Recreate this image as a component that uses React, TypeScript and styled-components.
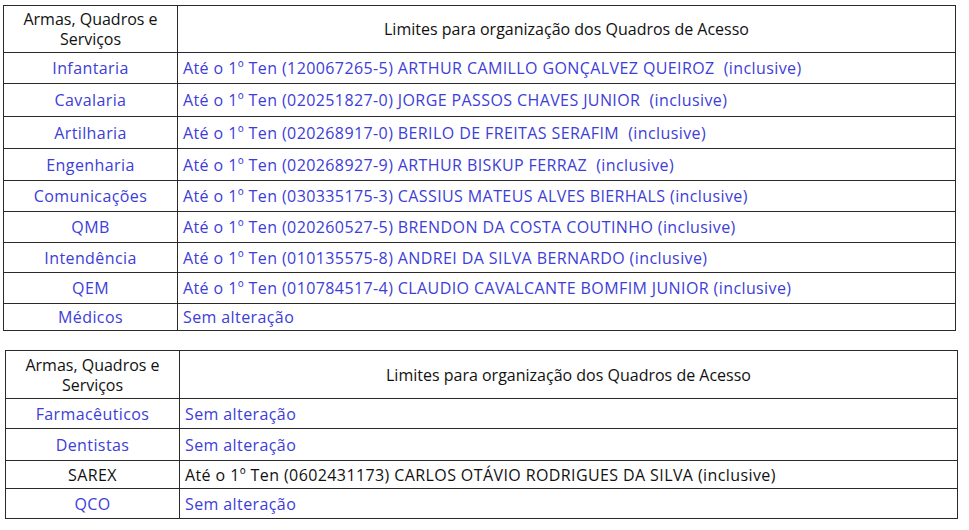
import styled, { createGlobalStyle } from "styled-components";

type Row = {
  name: string;
  limit: string;
  dark?: boolean;
  height: number;
};

const firstTable: Row[] = [
  { name: "Infantaria", limit: "Até o 1º Ten (120067265-5) ARTHUR CAMILLO GONÇALVEZ QUEIROZ  (inclusive)", height: 31 },
  { name: "Cavalaria", limit: "Até o 1º Ten (020251827-0) JORGE PASSOS CHAVES JUNIOR  (inclusive)", height: 33 },
  { name: "Artilharia", limit: "Até o 1º Ten (020268917-0) BERILO DE FREITAS SERAFIM  (inclusive)", height: 32 },
  { name: "Engenharia", limit: "Até o 1º Ten (020268927-9) ARTHUR BISKUP FERRAZ  (inclusive)", height: 32 },
  { name: "Comunicações", limit: "Até o 1º Ten (030335175-3) CASSIUS MATEUS ALVES BIERHALS (inclusive)", height: 31 },
  { name: "QMB", limit: "Até o 1º Ten (020260527-5) BRENDON DA COSTA COUTINHO (inclusive)", height: 31 },
  { name: "Intendência", limit: "Até o 1º Ten (010135575-8) ANDREI DA SILVA BERNARDO (inclusive)", height: 30 },
  { name: "QEM", limit: "Até o 1º Ten (010784517-4) CLAUDIO CAVALCANTE BOMFIM JUNIOR (inclusive)", height: 31 },
  { name: "Médicos", limit: "Sem alteração", height: 27 },
];

const secondTable: Row[] = [
  { name: "Farmacêuticos", limit: "Sem alteração", height: 30 },
  { name: "Dentistas", limit: "Sem alteração", height: 32 },
  { name: "SAREX", limit: "Até o 1º Ten (0602431173) CARLOS OTÁVIO RODRIGUES DA SILVA (inclusive)", dark: true, height: 28 },
  { name: "QCO", limit: "Sem alteração", height: 30 },
];

const GlobalStyle = createGlobalStyle`
  body {
    margin: 0;
    background: #ffffff;
    font-family: "Open Sans", "Liberation Sans", sans-serif;
  }
`;

const AccessTable = ({ rows, offset, headerHeight }: { rows: Row[]; offset: number; headerHeight: number }) => (
  <Table $offset={offset}>
    <colgroup>
      <col style={{ width: 174 }} />
      <col />
    </colgroup>
    <thead>
      <tr style={{ height: headerHeight }}>
        <HeadCell>
          Armas, Quadros e
          <br />
          Serviços
        </HeadCell>
        <HeadCell>Limites para organização dos Quadros de Acesso</HeadCell>
      </tr>
    </thead>
    <tbody>
      {rows.map((row) => (
        <tr key={row.name} style={{ height: row.height }}>
          <NameCell $dark={row.dark}>{row.name}</NameCell>
          <LimitCell $dark={row.dark}>{row.limit}</LimitCell>
        </tr>
      ))}
    </tbody>
  </Table>
);

export default function App() {
  return (
    <Page>
      <GlobalStyle />
      <AccessTable rows={firstTable} offset={3} headerHeight={47} />
      <AccessTable rows={secondTable} offset={5} headerHeight={48} />
    </Page>
  );
}

const Page = styled.div`
  display: flex;
  flex-direction: column;
  gap: 19px;
  padding-top: 5px;
  width: 969px;
`;

const Table = styled.table<{ $offset: number }>`
  margin-left: ${(p) => p.$offset}px;
  width: 953px;
  border-collapse: collapse;
  table-layout: fixed;
  font-size: 16px;
  letter-spacing: 0.4px;

  td,
  th {
    border: 1px solid #2a2a2a;
    padding: 0 5px;
  }
`;

const HeadCell = styled.th`
  font-weight: 400;
  color: #111111;
  text-align: center;
  line-height: 20px;
  letter-spacing: 0;
  vertical-align: middle;
  white-space: nowrap;
`;

const NameCell = styled.td<{ $dark?: boolean }>`
  text-align: center;
  color: ${(p) => (p.$dark ? "#111111" : "#3d3dd8")};
  vertical-align: middle;
`;

const LimitCell = styled.td<{ $dark?: boolean }>`
  white-space: pre;
  color: ${(p) => (p.$dark ? "#111111" : "#3d3dd8")};
  vertical-align: middle;
`;
